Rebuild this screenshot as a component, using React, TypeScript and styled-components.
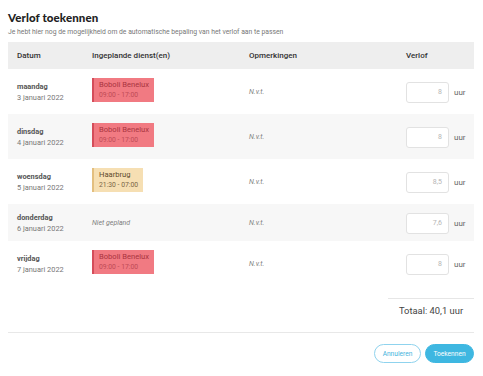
import React from "react";
import styled, { createGlobalStyle } from "styled-components";

const GlobalStyle = createGlobalStyle`
  html, body { margin: 0; padding: 0; background: #ffffff; }
  body { font-family: Roboto, "Liberation Sans", Arial, sans-serif; }
  * { box-sizing: border-box; }
`;

const Page = styled.div`
  padding: 8px 9px 8px 8px;
  width: 483px;
`;

const Title = styled.h1`
  margin: 3px 0 0 0;
  font-family: Lato, "Noto Sans", sans-serif;
  font-weight: 900;
  font-size: 11.5px;
  line-height: 14px;
  color: #222;
  letter-spacing: 0.1px;
`;

const Subtitle = styled.p`
  margin: 3px 0 0 0;
  font-size: 6.8px;
  line-height: 9px;
  color: #777;
`;

const Table = styled.div`
  margin-top: 5px;
  display: flex;
  flex-direction: column;
`;

const Grid = styled.div<{ $shade?: string }>`
  display: grid;
  grid-template-columns: 75px 157px 157px 1fr;
  align-items: center;
  background: ${(p) => p.$shade ?? "#ffffff"};
`;

const HeaderRow = styled(Grid)`
  height: 27px;
  background: #eeeeee;
`;

const HeadCell = styled.div`
  padding: 0 9px;
  font-size: 8px;
  font-weight: 500;
  color: #333;
`;

const BodyRow = styled(Grid)`
  padding: 8px 0 7px 0;
  min-height: 37px;
`;

const Cell = styled.div`
  padding: 0 9px;
  display: flex;
  align-items: center;
`;

const DateBlock = styled.div`
  display: flex;
  flex-direction: column;
`;

const DayName = styled.span`
  font-size: 7.4px;
  line-height: 11px;
  font-weight: 700;
  color: #555;
`;

const DayDate = styled.span`
  font-size: 7.4px;
  line-height: 11px;
  color: #777;
`;

const shiftColors = {
  red: { bg: "#f17a82", border: "#d44d5a", title: "#a9343f", time: "#c04b57" },
  yellow: { bg: "#f6dfb3", border: "#e3bf7f", title: "#5e4a2d", time: "#7b6646" },
};

const ShiftBox = styled.div<{ $tone: "red" | "yellow" }>`
  margin: 1px 0 5px 0;
  height: 24px;
  display: flex;
  flex-direction: column;
  justify-content: center;
  padding: 0 5px 0 5px;
  background: ${(p) => shiftColors[p.$tone].bg};
  border-left: 2px solid ${(p) => shiftColors[p.$tone].border};
`;

const ShiftTitle = styled.span<{ $tone: "red" | "yellow" }>`
  font-size: 7.6px;
  line-height: 10px;
  color: ${(p) => shiftColors[p.$tone].title};
`;

const ShiftTime = styled.span<{ $tone: "red" | "yellow" }>`
  font-size: 6.8px;
  line-height: 10px;
  color: ${(p) => shiftColors[p.$tone].time};
`;

const Muted = styled.span`
  font-size: 7px;
  font-style: italic;
  color: #808080;
`;

const HoursCell = styled(Cell)`
  gap: 5px;
`;

const HoursInput = styled.div`
  width: 43px;
  height: 21px;
  border: 1px solid #e2e2e2;
  border-radius: 3px;
  background: #fff;
  display: flex;
  align-items: center;
  justify-content: flex-end;
  padding-right: 6px;
  font-size: 7px;
  color: #b5b5b5;
`;

const Unit = styled.span`
  font-size: 8px;
  color: #666;
`;

const TotalRow = styled.div`
  display: flex;
  justify-content: flex-end;
  margin-top: 12px;
`;

const TotalBox = styled.div`
  width: 86px;
  border-top: 1px solid #e6e6e6;
  height: 23px;
  display: flex;
  align-items: center;
  justify-content: center;
  font-size: 9.4px;
  color: #444;
`;

const Divider = styled.div`
  margin-top: 11px;
  height: 1px;
  background: #e8e8e8;
`;

const Actions = styled.div`
  display: flex;
  justify-content: flex-end;
  gap: 4px;
  margin-top: 11px;
`;

const Button = styled.button<{ $primary?: boolean }>`
  height: 19px;
  padding: 0;
  width: ${(p) => (p.$primary ? "49px" : "47px")};
  border-radius: 10px;
  font-family: Roboto, "Liberation Sans", sans-serif;
  font-size: 6.6px;
  border: 1px solid ${(p) => (p.$primary ? "#3eb7e1" : "#8fd3ee")};
  background: ${(p) => (p.$primary ? "#3eb7e1" : "#ffffff")};
  color: ${(p) => (p.$primary ? "#ffffff" : "#43b3dc")};
`;

type Row = {
  day: string;
  date: string;
  shift?: { name: string; time: string; tone: "red" | "yellow" };
  hours: string;
};

const rows: Row[] = [
  { day: "maandag", date: "3 januari 2022", shift: { name: "Boboli Benelux", time: "09:00 - 17:00", tone: "red" }, hours: "8" },
  { day: "dinsdag", date: "4 januari 2022", shift: { name: "Boboli Benelux", time: "09:00 - 17:00", tone: "red" }, hours: "8" },
  { day: "woensdag", date: "5 januari 2022", shift: { name: "Haarbrug", time: "21:30 - 07:00", tone: "yellow" }, hours: "8,5" },
  { day: "donderdag", date: "6 januari 2022", hours: "7,6" },
  { day: "vrijdag", date: "7 januari 2022", shift: { name: "Boboli Benelux", time: "09:00 - 17:00", tone: "red" }, hours: "8" },
];

export default function App() {
  return (
    <>
      <GlobalStyle />
      <Page>
        <Title>Verlof toekennen</Title>
        <Subtitle>
          Je hebt hier nog de mogelijkheid om de automatische bepaling van het verlof aan te passen
        </Subtitle>
        <Table>
          <HeaderRow>
            <HeadCell>Datum</HeadCell>
            <HeadCell>Ingeplande dienst(en)</HeadCell>
            <HeadCell>Opmerkingen</HeadCell>
            <HeadCell>Verlof</HeadCell>
          </HeaderRow>
          {rows.map((r, i) => (
            <BodyRow key={r.day} $shade={i % 2 === 1 ? "#f7f7f7" : "#ffffff"}>
              <Cell>
                <DateBlock>
                  <DayName>{r.day}</DayName>
                  <DayDate>{r.date}</DayDate>
                </DateBlock>
              </Cell>
              <Cell>
                {r.shift ? (
                  <ShiftBox $tone={r.shift.tone}>
                    <ShiftTitle $tone={r.shift.tone}>{r.shift.name}</ShiftTitle>
                    <ShiftTime $tone={r.shift.tone}>{r.shift.time}</ShiftTime>
                  </ShiftBox>
                ) : (
                  <Muted>Niet gepland</Muted>
                )}
              </Cell>
              <Cell>
                <Muted>N.v.t.</Muted>
              </Cell>
              <HoursCell>
                <HoursInput>{r.hours}</HoursInput>
                <Unit>uur</Unit>
              </HoursCell>
            </BodyRow>
          ))}
        </Table>
        <TotalRow>
          <TotalBox>Totaal: 40,1 uur</TotalBox>
        </TotalRow>
        <Divider />
        <Actions>
          <Button>Annuleren</Button>
          <Button $primary>Toekennen</Button>
        </Actions>
      </Page>
    </>
  );
}
